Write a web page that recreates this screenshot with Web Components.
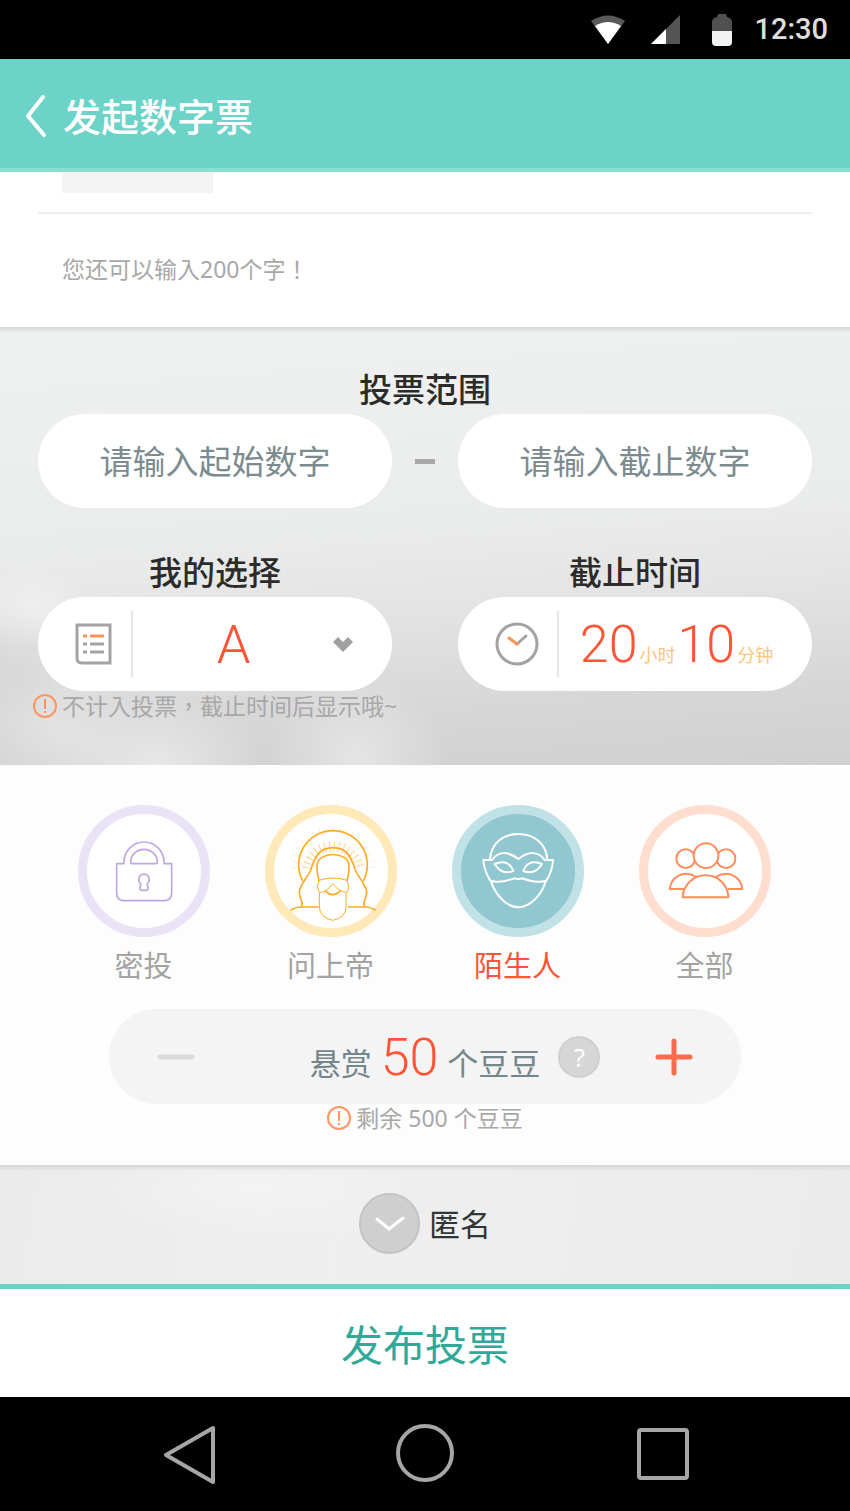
<!DOCTYPE html>
<html lang="zh-CN">
<head>
<meta charset="UTF-8">
<meta name="viewport" content="width=device-width, initial-scale=1">
<title>发起数字票</title>
<style>
    body {
        margin: 0;
        background: #000;
        font-family: "Noto Sans", "Noto Sans CJK SC", sans-serif;
    }
</style>
</head>
<body>
<vote-page></vote-page>

<script>
class StatusBar extends HTMLElement {
    constructor() {
        super();
        this.attachShadow({ mode: 'open' });
    }

    connectedCallback() {
        this.shadowRoot.innerHTML = `
            <style>
                :host {
                    display: flex;
                    align-items: center;
                    justify-content: flex-end;
                    height: 59px;
                    padding-right: 22px;
                    background: #000;
                    color: #dedede;
                    font: 500 29px/59px Roboto, sans-serif;
                }
                svg { display: block; }
                .wifi { margin-right: 26px; }
                .signal { margin-right: 32px; }
                .battery { margin-right: 22px; }
            </style>
            <svg class="wifi" width="34" height="30" viewBox="0 0 34 30" aria-hidden="true">
                <path d="M0 6Q17-5 34 6L17 29Z" fill="#5a5a5a"/>
                <path d="M4 11Q17 3 30 11L17 29Z" fill="#fff"/>
            </svg>
            <svg class="signal" width="29" height="30" viewBox="0 0 29 30" aria-hidden="true">
                <path d="M0 29L29 0V29Z" fill="#555"/>
                <path d="M0 29L15 14V29Z" fill="#fff"/>
            </svg>
            <svg class="battery" width="20" height="32" viewBox="0 0 20 32" aria-hidden="true">
                <path d="M6 0H14L15 3Q20 4 20 8V17H0V8Q0 4 5 3Z" fill="#505050"/>
                <path d="M0 17H20V28Q20 32 16 32H4Q0 32 0 28Z" fill="#f2f2f2"/>
            </svg>
            <span>12:30</span>
        `;
    }
}

class PageHeader extends HTMLElement {
    constructor() {
        super();
        this.attachShadow({ mode: 'open' });
    }

    connectedCallback() {
        this.shadowRoot.innerHTML = `
            <style>
                :host {
                    display: flex;
                    align-items: center;
                    gap: 16px;
                    height: 105px;
                    padding: 4px 0 0 25px;
                    border-bottom: 4px solid #87dfd4;
                    background: #6bd3c7;
                    color: #fff;
                }
                button {
                    padding: 0;
                    border: none;
                    background: none;
                    cursor: pointer;
                }
                svg { display: block; }
                h1 {
                    margin: 0;
                    font-size: 38px;
                    font-weight: 500;
                    line-height: 48px;
                }
            </style>
            <button type="button" aria-label="返回">
                <svg width="22" height="44" viewBox="0 0 22 44" fill="none" stroke="#fff" stroke-width="4" stroke-linecap="round" stroke-linejoin="round">
                    <path d="M18 3L3 22L19 41"/>
                </svg>
            </button>
            <h1><slot></slot></h1>
        `;
        this.shadowRoot.querySelector('button').onclick = () => history.back();
    }
}

// Small orange "!" followed by a hint
class HintText extends HTMLElement {
    constructor() {
        super();
        this.attachShadow({ mode: 'open' });
    }

    connectedCallback() {
        this.shadowRoot.innerHTML = `
            <style>
                :host {
                    display: flex;
                    align-items: center;
                    gap: 5px;
                    color: #a8a8a8;
                    font-family: "Noto Sans", "Noto Sans CJK TC", sans-serif;
                    font-size: 23px;
                    line-height: 28px;
                    white-space: nowrap;
                }
                :host([plain]) svg { display: none; }
                svg { flex: none; }
            </style>
            <svg width="24" height="24" viewBox="0 0 24 24" fill="none" stroke="#ff9560" stroke-width="2" aria-hidden="true">
                <circle cx="12" cy="12" r="11"/>
                <path d="M12 5V15M12 17V19"/>
            </svg>
            <span><slot></slot></span>
        `;
    }
}

class VoteContent extends HTMLElement {
    constructor() {
        super();
        this.attachShadow({ mode: 'open' });
    }

    connectedCallback() {
        this.shadowRoot.innerHTML = `
            <style>
                :host {
                    display: block;
                    padding: 0 38px 44px;
                    background: #fff;
                }
                .thumb {
                    width: 151px;
                    height: 21px;
                    margin-left: 24px;
                    background: #f4f4f4;
                }
                hr {
                    height: 2px;
                    margin: 19px 0 41px;
                    border: none;
                    background: #eee;
                }
                hint-text { margin-left: 24px; }
            </style>
            <div class="thumb"></div>
            <hr>
            <hint-text plain lang="zh-TW">您还可以输入200个字！</hint-text>
        `;
    }
}

class VoteScope extends HTMLElement {
    constructor() {
        super();
        this.attachShadow({ mode: 'open' });
    }

    connectedCallback() {
        this.shadowRoot.innerHTML = `
            <style>
                :host {
                    display: block;
                    padding: 39px 38px 44px;
                    background:
                        linear-gradient(#d4d5d5, rgba(225, 226, 226, 0) 6px),
                        radial-gradient(ellipse 110px 70px at 18% 100%, rgba(240, 240, 240, .7), rgba(240, 240, 240, 0)),
                        radial-gradient(ellipse 90px 80px at 42% 98%, rgba(236, 236, 236, .7), rgba(236, 236, 236, 0)),
                        radial-gradient(ellipse 80px 60px at 7% 92%, rgba(238, 238, 238, .5), rgba(238, 238, 238, 0)),
                        radial-gradient(ellipse 60px 40px at 4% 64%, rgba(244, 244, 244, .6), rgba(244, 244, 244, 0)),
                        radial-gradient(ellipse 90px 70px at 0 78%, rgba(205, 205, 205, .4), rgba(205, 205, 205, 0)),
                        linear-gradient(176deg, #eff0f0 4%, #eaebeb 46%, #e4e4e4 62%, #d7d7d7 82%, #d0d0d0);
                }
                h2, .title {
                    display: block;
                    margin: 0;
                    color: #2b2b2b;
                    font-size: 33px;
                    font-weight: 500;
                    line-height: 48px;
                    text-align: center;
                }
                .row {
                    display: grid;
                    grid-template-columns: minmax(0, 1fr) 20px minmax(0, 1fr);
                    column-gap: 23px;
                    align-items: center;
                }
                .fields { margin-top: 41px; }
                .dash {
                    height: 5px;
                    background: #a9a9a9;
                }
                input, .pill {
                    box-sizing: border-box;
                    width: 100%;
                    height: 94px;
                    border: none;
                    border-radius: 47px;
                    background: #fff;
                }
                input {
                    padding: 0 40px;
                    color: #7b8b90;
                    font: inherit;
                    font-size: 33px;
                    text-align: center;
                    outline: none;
                }
                input::placeholder {
                    color: #7b8b90;
                    opacity: 1;
                }
                .pill {
                    display: flex;
                    align-items: center;
                    padding: 0 38px;
                }
                .pill svg {
                    flex: none;
                    overflow: visible;
                }
                .field:last-child { grid-column: 3; }
                .divider {
                    width: 2px;
                    height: 66px;
                    margin-left: 18px;
                    background: #e6e6e6;
                }
                select {
                    flex: 1;
                    min-width: 0;
                    height: 94px;
                    padding: 0;
                    border: none;
                    appearance: none;
                    background: none;
                    color: #ff5535;
                    font: 300 54px Roboto, sans-serif;
                    text-align: center;
                    text-align-last: center;
                    outline: none;
                }
                .time {
                    display: flex;
                    flex: 1;
                    gap: 2px;
                    align-items: baseline;
                    justify-content: center;
                    padding: 2px 0 0 20px;
                    border: none;
                    background: none;
                    color: #ffc47d;
                    font: inherit;
                    font-size: 18px;
                    line-height: 20px;
                    white-space: nowrap;
                    cursor: pointer;
                }
                .time b {
                    color: #ff5535;
                    font: 300 52px/60px Roboto, sans-serif;
                }
                hint-text {
                    margin-left: -5px;
                    line-height: 30px;
                }
            </style>
            <h2 id="range">投票范围</h2>
            <div class="row" role="group" aria-labelledby="range">
                <input type="text" inputmode="numeric" placeholder="请输入起始数字" aria-label="起始数字">
                <span class="dash"></span>
                <input type="text" inputmode="numeric" placeholder="请输入截止数字" aria-label="截止数字">
            </div>
            <div class="row fields">
                <div class="field">
                    <label class="title" for="choice">我的选择</label>
                    <div class="pill">
                        <svg width="37" height="42" viewBox="0 0 37 42" fill="none" stroke="#a3a3a3" stroke-width="3" aria-hidden="true">
                            <path d="M1 2H34V40H6Q1 40 1 35Z"/>
                            <path d="M7 13H11M14 13H28" stroke="#ff9254"/>
                            <path d="M7 21H11M14 21H28M7 29H11M14 29H28"/>
                        </svg>
                        <span class="divider"></span>
                        <select id="choice">
                            <option>A</option>
                            <option>B</option>
                        </select>
                        <svg width="20" height="16" viewBox="0 0 20 16" fill="#a0a0a0" aria-hidden="true">
                            <path d="M4 1L9 6L14 1L19 6L9 16L-1 6Z"/>
                        </svg>
                    </div>
                </div>
                <div class="field">
                    <label class="title" for="deadline">截止时间</label>
                    <div class="pill">
                        <svg width="43" height="42" viewBox="0 0 43 42" fill="none" stroke="#a3a3a3" stroke-width="3" stroke-linecap="round" aria-hidden="true">
                            <circle cx="21" cy="21" r="20"/>
                            <path d="M21 21L30 13"/>
                            <path d="M13 15L21 21" stroke="#ff9254"/>
                        </svg>
                        <span class="divider"></span>
                        <button class="time" id="deadline" type="button">
                            <b>20</b><span>小时</span><b>10</b><span>分钟</span>
                        </button>
                    </div>
                </div>
            </div>
            <hint-text lang="zh-TW">不计入投票，截止时间后显示哦~</hint-text>
        `;
    }
}

const AUDIENCES = [
    {
        id: 'secret',
        label: '密投',
        ring: '#e9e3f5',
        ink: '#bda7e3',
        icon: `
            <path d="M116 176H138V171a60 60 0 0 1 120 0V176H281V264Q281 287 258 287H138Q116 287 116 264Z"/>
            <path d="M158 172a40 39 0 0 1 80 0q0 4-4 4H162q-4 0-4-4Z"/>
            <path d="M188 236a16 16 0 1 1 20 0l2 14q0 6-6 6H192q-6 0-6-6Z"/>`
    },
    {
        id: 'god',
        label: '问上帝',
        ring: '#ffe9b9',
        ink: '#ffab27',
        icon: `
            <path d="M113 228A103 103 0 1 1 295 228"/>
            <path d="M127 190A78 78 0 0 1 281 190" stroke-width="32" stroke-dasharray="3 11" opacity=".5"/>
            <path d="M88 190A116 116 0 0 1 320 190" stroke-width="20" stroke-dasharray="3 17" opacity=".2"/>
            <path d="M76 316Q92 305 110 306H160M110 304C116 285 101 280 103 260C107 237 125 220 136 198C147 165 157 128 204 128C251 128 261 165 272 198C283 220 301 237 305 260C307 280 292 285 298 304M248 306H298Q316 305 332 316"/>
            <path d="M162 228C154 200 156 185 156 180C160 138 248 138 252 180C252 185 254 200 246 228"/>
            <path d="M162 226Q204 212 246 226Q256 250 245 262Q223 262 203 236Q183 264 162 262Q153 245 162 226Z" stroke-width="3"/>
            <path d="M180 256Q203 282 227 256"/>
            <path d="M163 264V306Q165 338 203 346Q243 338 243 306V264" stroke-width="3"/>`
    },
    {
        id: 'stranger',
        label: '陌生人',
        ring: '#c0e1e6',
        ink: '#fff',
        fill: '#91c7d0',
        checked: true,
        icon: `
            <g stroke-width="6">
                <path d="M114 164C117 115 152 87 199 87C246 87 283 115 286 164"/>
                <path d="M94 165H120C138 138 168 138 199 162C230 138 260 138 278 165H303Q302 195 284 226C255 238 225 225 211 220L199 223L187 220C172 225 142 238 114 226Q96 195 94 165Z"/>
                <path d="M116 226C132 276 168 307 199 307C230 307 268 276 282 226"/>
                <path d="M128 177Q169 160 184 198Q148 211 128 177ZM270 177Q229 160 214 198Q250 211 270 177Z"/>
            </g>`
    },
    {
        id: 'all',
        label: '全部',
        ring: '#ffded0',
        ink: '#ff8d5c',
        icon: `
            <g stroke-width="6">
                <circle cx="140" cy="161" r="28"/>
                <circle cx="261" cy="161" r="28"/>
                <path d="M135 252H92C96 219 130 192 172 216M267 252H310C306 219 272 192 230 216"/>
                <circle cx="201" cy="152" r="37" fill="#fff"/>
                <path d="M131 277C132 238 165 211 200 211C236 211 267 238 268 277Z" fill="#fff"/>
            </g>`
    }
];

class AudiencePicker extends HTMLElement {
    constructor() {
        super();
        this.attachShadow({ mode: 'open' });
    }

    get value() {
        return this.shadowRoot.querySelector('input:checked').value;
    }

    connectedCallback() {
        this.shadowRoot.innerHTML = `
            <style>
                :host {
                    display: grid;
                    grid-template-columns: repeat(4, 1fr);
                    padding: 0 52px 0 50px;
                }
                label {
                    display: grid;
                    justify-items: center;
                    row-gap: 7px;
                    color: #a3a3a3;
                    font-size: 29px;
                    line-height: 44px;
                    cursor: pointer;
                }
                input {
                    grid-area: 1 / 1;
                    box-sizing: border-box;
                    width: 132px;
                    height: 132px;
                    margin: 0;
                    appearance: none;
                    border: 9px solid var(--ring);
                    border-radius: 50%;
                    background: var(--fill);
                }
                svg {
                    grid-area: 1 / 1;
                    pointer-events: none;
                }
                label:has(:checked) { color: #ff5535; }
            </style>
            ${AUDIENCES.map(a => `
                <label style="--ring: ${a.ring}; --fill: ${a.fill || '#fff'}">
                    <input type="radio" name="audience" value="${a.id}" ${a.checked ? 'checked' : ''}>
                    <svg width="132" height="132" viewBox="0 0 396 396" fill="none" stroke="${a.ink}" stroke-width="5" stroke-linejoin="round" aria-hidden="true">${a.icon}</svg>
                    <span>${a.label}</span>
                </label>
            `).join('')}
        `;
    }
}

class RewardStepper extends HTMLElement {
    constructor() {
        super();
        this.attachShadow({ mode: 'open' });
        this.amount = 50;
    }

    connectedCallback() {
        this.shadowRoot.innerHTML = `
            <style>
                :host {
                    display: flex;
                    align-items: center;
                    height: 95px;
                    margin: 21px 109px 0;
                    padding: 0 48px;
                    box-sizing: border-box;
                    border-radius: 48px;
                    background: #f4f4f4;
                }
                button {
                    flex: none;
                    padding: 0;
                    border: none;
                    background: none;
                    cursor: pointer;
                }
                svg { display: block; }
                .amount {
                    display: flex;
                    flex: 1;
                    align-items: center;
                    justify-content: center;
                    gap: 18px;
                    padding-left: 60px;
                }
                p {
                    display: flex;
                    gap: 9px;
                    align-items: baseline;
                    margin: 0;
                    padding-top: 2px;
                    color: #74858b;
                    font-size: 31px;
                    line-height: 40px;
                    white-space: nowrap;
                }
                output {
                    color: #ff5535;
                    font: 300 52px/60px Roboto, sans-serif;
                }
                .help {
                    width: 42px;
                    height: 42px;
                    border: 2px solid #cfcfcf;
                    border-radius: 50%;
                    background: #d6d6d6;
                    color: #fff;
                    font: inherit;
                    font-size: 26px;
                    line-height: 36px;
                }
            </style>
            <button class="minus" type="button" aria-label="减少">
                <svg width="38" height="38" viewBox="0 0 38 38" stroke="#dadada" stroke-width="5" stroke-linecap="round"><path d="M3 19H35"/></svg>
            </button>
            <div class="amount">
                <p><span>悬赏</span><output>${this.amount}</output><span>个豆豆</span></p>
                <button class="help" type="button">?</button>
            </div>
            <button class="plus" type="button" aria-label="增加">
                <svg width="38" height="38" viewBox="0 0 38 38" stroke="#ff6a4e" stroke-width="5" stroke-linecap="round"><path d="M3 19H35M19 3V35"/></svg>
            </button>
        `;
        this.shadowRoot.querySelector('.minus').onclick = () => this.step(-10);
        this.shadowRoot.querySelector('.plus').onclick = () => this.step(10);
    }

    step(delta) {
        this.amount = Math.max(0, Math.min(500, this.amount + delta));
        this.shadowRoot.querySelector('output').textContent = this.amount;
    }
}

class AnonymousToggle extends HTMLElement {
    constructor() {
        super();
        this.attachShadow({ mode: 'open' });
    }

    connectedCallback() {
        this.shadowRoot.innerHTML = `
            <style>
                :host {
                    display: flex;
                    justify-content: center;
                    padding: 28px 0 30px;
                    background:
                        linear-gradient(#d4d5d5, rgba(225, 226, 226, 0) 6px),
                        radial-gradient(ellipse 160px 50px at 30% 20%, #f3f3f3, rgba(243, 243, 243, 0)),
                        linear-gradient(100deg, #ebebeb, #efefef 40%, #ebebeb);
                }
                label {
                    display: grid;
                    grid-template-columns: 61px auto;
                    column-gap: 9px;
                    align-items: center;
                    color: #2f3638;
                    font-size: 31px;
                    line-height: 48px;
                    cursor: pointer;
                }
                input {
                    grid-area: 1 / 1;
                    box-sizing: border-box;
                    width: 61px;
                    height: 61px;
                    margin: 0;
                    appearance: none;
                    border: 2px solid #c3c3c3;
                    border-radius: 50%;
                    background: #cfcfcf;
                }
                input:checked { background: #6bd3c7; }
                svg {
                    grid-area: 1 / 1;
                    justify-self: center;
                    pointer-events: none;
                }
            </style>
            <label>
                <input type="checkbox">
                <svg width="30" height="16" viewBox="0 0 30 16" fill="none" stroke="#fff" stroke-width="3" stroke-linecap="round" aria-hidden="true">
                    <path d="M2 3L14 13L28 2"/>
                </svg>
                <span>匿名</span>
            </label>
        `;
    }
}

class SubmitBar extends HTMLElement {
    constructor() {
        super();
        this.attachShadow({ mode: 'open' });
    }

    connectedCallback() {
        this.shadowRoot.innerHTML = `
            <style>
                :host { display: block; }
                button {
                    display: block;
                    width: 100%;
                    padding: 26px 0 22px;
                    border: none;
                    border-top: 5px solid #6bd3c7;
                    background: #fff;
                    color: #31a999;
                    font: inherit;
                    font-size: 42px;
                    line-height: 60px;
                    cursor: pointer;
                }
            </style>
            <button type="submit"><slot></slot></button>
        `;
    }
}

class NavBar extends HTMLElement {
    constructor() {
        super();
        this.attachShadow({ mode: 'open' });
    }

    connectedCallback() {
        this.shadowRoot.innerHTML = `
            <style>
                :host {
                    display: flex;
                    align-items: center;
                    justify-content: space-between;
                    height: 114px;
                    padding: 0 158px 0 161px;
                    background: #000;
                }
                button {
                    padding: 0;
                    border: none;
                    background: none;
                }
                svg {
                    display: block;
                    overflow: visible;
                }
            </style>
            <button type="button" aria-label="返回">
                <svg width="58" height="60" viewBox="0 0 58 60" fill="none" stroke="#a6a6a6" stroke-width="4" stroke-linejoin="round"><path d="M52 4V58L5 31Z"/></svg>
            </button>
            <button type="button" aria-label="主页">
                <svg width="58" height="60" viewBox="0 0 58 60" fill="none" stroke="#a6a6a6" stroke-width="4"><circle cx="27" cy="29" r="27"/></svg>
            </button>
            <button type="button" aria-label="最近任务">
                <svg width="58" height="60" viewBox="0 0 58 60" fill="none" stroke="#a6a6a6" stroke-width="4"><rect x="5" y="6" width="48" height="48" rx="2"/></svg>
            </button>
        `;
    }
}

class VotePage extends HTMLElement {
    constructor() {
        super();
        this.attachShadow({ mode: 'open' });
    }

    connectedCallback() {
        this.shadowRoot.innerHTML = `
            <style>
                :host { display: block; }
                .audience {
                    padding: 40px 0 33px;
                    background: #fdfdfd;
                }
                .audience hint-text { justify-content: center; }
            </style>
            <status-bar></status-bar>
            <page-header>发起数字票</page-header>
            <main>
                <vote-content></vote-content>
                <vote-scope></vote-scope>
                <section class="audience">
                    <audience-picker></audience-picker>
                    <reward-stepper></reward-stepper>
                    <hint-text>剩余 500 个豆豆</hint-text>
                </section>
                <anonymous-toggle></anonymous-toggle>
                <submit-bar>发布投票</submit-bar>
            </main>
            <nav-bar></nav-bar>
        `;
    }
}

customElements.define('status-bar', StatusBar);
customElements.define('page-header', PageHeader);
customElements.define('hint-text', HintText);
customElements.define('vote-content', VoteContent);
customElements.define('vote-scope', VoteScope);
customElements.define('audience-picker', AudiencePicker);
customElements.define('reward-stepper', RewardStepper);
customElements.define('anonymous-toggle', AnonymousToggle);
customElements.define('submit-bar', SubmitBar);
customElements.define('nav-bar', NavBar);
customElements.define('vote-page', VotePage);
</script>
</body>
</html>
